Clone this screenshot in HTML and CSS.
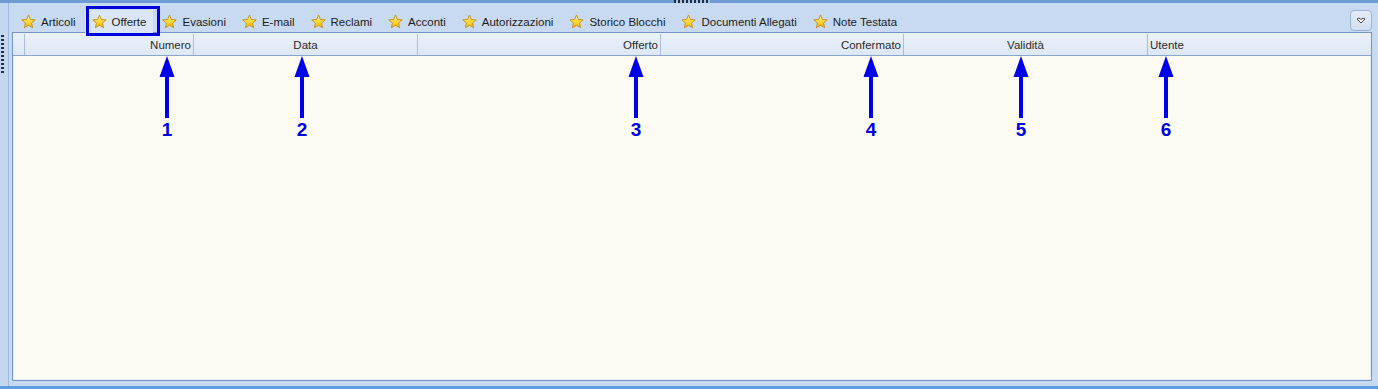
FILE: index.html
```html
<!DOCTYPE html>
<html lang="it">
<head>
  <meta charset="UTF-8" />
  <meta name="viewport" content="width=device-width, initial-scale=1.0" />
  <title>Offerte</title>
  <link rel="stylesheet" href="styles.css">
</head>
<body>
  <svg width="0" height="0" class="defs">
    <defs>
      <linearGradient id="starFill" x1="0" y1="0" x2="0" y2="1">
        <stop offset="0" stop-color="#fff3a0" />
        <stop offset="0.5" stop-color="#ffd93a" />
        <stop offset="1" stop-color="#f2b400" />
      </linearGradient>
      <symbol id="star" viewBox="0 0 16 16">
        <polygon points="8,1.1 10,5.85 15.13,6.28 11.23,9.65 12.41,14.67 8,12 3.59,14.67 4.77,9.65 0.87,6.28 6,5.85"
          fill="url(#starFill)" stroke="#c58f1c" stroke-width="1" stroke-linejoin="round" />
      </symbol>
    </defs>
  </svg>

  <div class="top-edge"><span class="grip-h"></span></div>

  <div class="content">
    <div class="side"><span class="grip-v"></span></div>

    <div class="pane">
      <div class="tabbar">
        <div class="tab"><svg class="star"><use href="#star" /></svg>Articoli</div>
        <div class="tab active"><svg class="star"><use href="#star" /></svg>Offerte</div>
        <div class="tab"><svg class="star"><use href="#star" /></svg>Evasioni</div>
        <div class="tab"><svg class="star"><use href="#star" /></svg>E-mail</div>
        <div class="tab"><svg class="star"><use href="#star" /></svg>Reclami</div>
        <div class="tab"><svg class="star"><use href="#star" /></svg>Acconti</div>
        <div class="tab"><svg class="star"><use href="#star" /></svg>Autorizzazioni</div>
        <div class="tab"><svg class="star"><use href="#star" /></svg>Storico Blocchi</div>
        <div class="tab"><svg class="star"><use href="#star" /></svg>Documenti Allegati</div>
        <div class="tab"><svg class="star"><use href="#star" /></svg>Note Testata</div>

        <button class="more" type="button">
          <svg width="10" height="7" viewBox="0 0 10 7">
            <path d="M1 2 L3 1 L5 2.6 L7 1 L9 2 L5 6 Z" fill="#fff" stroke="#4a4a4a" stroke-width="1" stroke-linejoin="round" />
          </svg>
        </button>
      </div>

      <div class="grid">
        <div class="grid-head">
          <div class="col sel"></div>
          <div class="col right">Numero</div>
          <div class="col center">Data</div>
          <div class="col right">Offerto</div>
          <div class="col right">Confermato</div>
          <div class="col center">Validità</div>
          <div class="col left last">Utente</div>
        </div>

        <div class="grid-body">
          <!-- numbered callouts -->
          <div class="marker m1"><svg width="16" height="62"><polygon points="8,0 0.5,21 15.5,21" /><rect x="6" y="20" width="4" height="42" /></svg><span>1</span></div>
          <div class="marker m2"><svg width="16" height="62"><polygon points="8,0 0.5,21 15.5,21" /><rect x="6" y="20" width="4" height="42" /></svg><span>2</span></div>
          <div class="marker m3"><svg width="16" height="62"><polygon points="8,0 0.5,21 15.5,21" /><rect x="6" y="20" width="4" height="42" /></svg><span>3</span></div>
          <div class="marker m4"><svg width="16" height="62"><polygon points="8,0 0.5,21 15.5,21" /><rect x="6" y="20" width="4" height="42" /></svg><span>4</span></div>
          <div class="marker m5"><svg width="16" height="62"><polygon points="8,0 0.5,21 15.5,21" /><rect x="6" y="20" width="4" height="42" /></svg><span>5</span></div>
          <div class="marker m6"><svg width="16" height="62"><polygon points="8,0 0.5,21 15.5,21" /><rect x="6" y="20" width="4" height="42" /></svg><span>6</span></div>
        </div>
      </div>
    </div>
  </div>

  <div class="bottom-edge"></div>
</body>
</html>
```

FILE: styles.css
```css
html, body {
  height: 100%;
}
body {
  margin: 0;
  background-color: #c8daf1;
  font-family: "Liberation Sans", Arial, sans-serif;
  font-size: 11.5px;
  color: #1b1b1b;
  display: flex;
  flex-direction: column;
  overflow: hidden;
}
.defs {
  position: absolute;
}
.top-edge {
  height: 3px;
  background-color: #6f9bd3;
  display: flex;
  justify-content: center;
}
.grip-h {
  width: 36px;
  height: 3px;
  margin-left: 6px;
  background: repeating-linear-gradient(90deg, #1f2f45 0 2px, #a9c3e6 2px 4px);
}
.content {
  flex: 1;
  display: flex;
  min-height: 0;
}
.side {
  width: 8px;
  border-right: 1px solid #9fb9dc;
  background-color: #c3d7f0;
  display: flex;
  justify-content: center;
}
.grip-v {
  width: 3px;
  height: 40px;
  margin-top: 32px;
  margin-right: 3px;
  background: repeating-linear-gradient(180deg, #1f2f45 0 2px, #c3d7f0 2px 4px);
}
.pane {
  flex: 1;
  display: flex;
  flex-direction: column;
  padding: 0 6px 5px 3px;
  min-width: 0;
}
.tabbar {
  height: 29px;
  display: flex;
  align-items: flex-end;
  padding-left: 2px;
  position: relative;
}
.tab {
  height: 23px;
  display: flex;
  align-items: center;
  gap: 5px;
  padding: 0 7px;
  margin-right: 2px;
  white-space: nowrap;
  position: relative;
  top: 1px;
}
.tab.active {
  background-color: #dbe7f6;
  z-index: 2;
}
/* annotation frame round the selected tab */
.tab.active::after {
  content: "";
  position: absolute;
  left: 1px;
  right: -7px;
  top: -4px;
  bottom: -3px;
  border: 3px solid #0000dc;
}
.star {
  width: 15px;
  height: 15px;
  flex: none;
}
.more {
  position: absolute;
  right: 0;
  top: 7px;
  width: 22px;
  height: 21px;
  padding: 0;
  border: 1px solid #9cb2d0;
  border-radius: 4px;
  background: linear-gradient(#e4edf8, #cfdef1);
  display: flex;
  align-items: center;
  justify-content: center;
}
.grid {
  flex: 1;
  display: flex;
  flex-direction: column;
  border: 1px solid #7495c4;
  box-shadow: inset 0 0 0 1px #e5edf8;
  background-color: #fbfaf3;
  min-height: 0;
}
.grid-head {
  height: 21px;
  display: grid;
  grid-template-columns: 12px 169px 224px 243px 243px 244px 1fr;
  background: linear-gradient(#e9f0fa, #dde8f5);
  border-top: 1px solid #e9f0fa;
  border-bottom: 1px solid #8aa6cf;
  color: #2a2a2a;
}
.col {
  border-right: 1px solid #a9bedc;
  display: flex;
  align-items: center;
  padding: 0 2px;
  white-space: nowrap;
}
.col.sel {
  padding: 0;
}
.col.right {
  justify-content: flex-end;
}
.col.center {
  justify-content: center;
}
.col.left {
  justify-content: flex-start;
}
.col.last {
  border-right: none;
}
.grid-body {
  flex: 1;
  position: relative;
}
.marker {
  position: absolute;
  top: 0;
  width: 30px;
  display: flex;
  flex-direction: column;
  align-items: center;
  color: #0000e6;
  fill: #0000e6;
}
.marker svg {
  display: block;
}
.marker span {
  font-family: "Liberation Sans", Arial, sans-serif;
  font-weight: bold;
  font-size: 19px;
  line-height: 18px;
  margin-top: 3px;
}
.m1 { left: 139px; }
.m2 { left: 274px; }
.m3 { left: 608px; }
.m4 { left: 843px; }
.m5 { left: 993px; }
.m6 { left: 1138px; }
.bottom-edge {
  height: 3px;
  background-color: #5c9ee2;
}
```
